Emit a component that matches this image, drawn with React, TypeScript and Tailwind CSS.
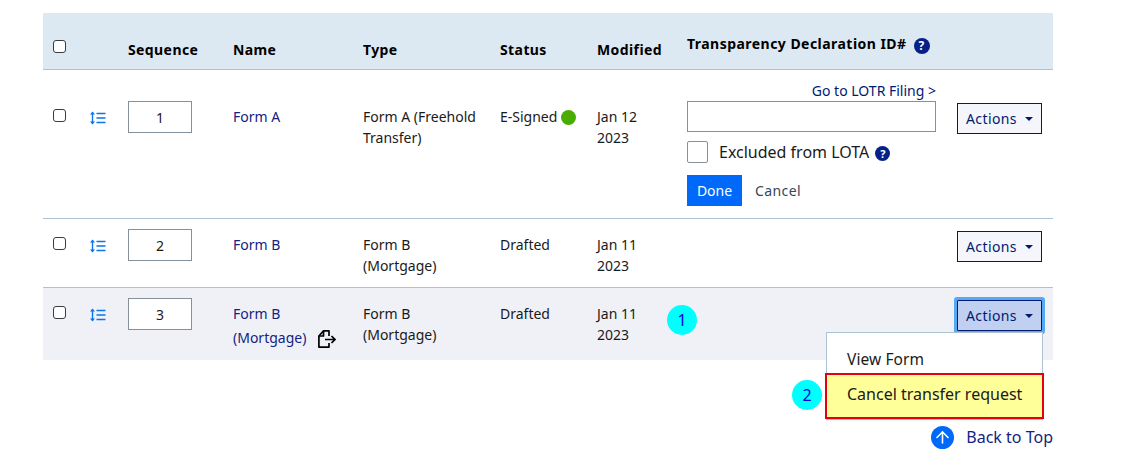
import { ArrowUp } from "lucide-react";

const rowGrid =
  "grid grid-cols-[37px_38px_105px_130px_137px_97px_90px_270px_96px] pl-[10px] text-[14px] leading-[21px]";

function Check() {
  return (
    <input
      type="checkbox"
      className="mt-[1px] block h-[13px] w-[13px] appearance-none rounded-[3px] border border-[#3b3b3b] bg-white"
    />
  );
}

function ReorderIcon() {
  return (
    <svg width="18" height="14" viewBox="0 0 18 14" fill="none" stroke="#0a74e8" className="mt-[3px] ml-[-1px]">
      <path d="M3.5 1.5v11" strokeWidth="1.4" />
      <path d="M1 3.5 3.5 .6 6 3.5zM1 10.5l2.5 2.9L6 10.5z" fill="#0a74e8" stroke="none" />
      <path d="M7.5 2.5h9M7.5 7h9M7.5 11.5h9" strokeWidth="1.5" />
    </svg>
  );
}

function HelpDot({ size }: { size: string }) {
  return (
    <span
      className={`${size} inline-flex items-center justify-center rounded-full bg-[#062089] align-middle font-bold text-white`}
    >
      ?
    </span>
  );
}

function ActionsButton({ open }: { open?: boolean }) {
  return (
    <button
      className={`flex h-[31px] w-[85px] items-center justify-center gap-[8px] border border-[#001a70] text-[14px] tracking-[0.4px] text-[#001a70] ${
        open ? "rounded-[1px] bg-[#c1d0f0] shadow-[0_0_0_3px_#56a8f5]" : "bg-[#f5f6fc]"
      }`}
    >
      Actions
      <span className="h-0 w-0 border-x-[4px] border-t-[4px] border-x-transparent border-t-[#001a70]" />
    </button>
  );
}

function SeqInput({ value }: { value: number }) {
  return (
    <div className="flex h-[32px] w-[64px] items-center justify-center border border-[#84919b] bg-white text-[#1a1a1a]">
      {value}
    </div>
  );
}

function Badge({ n }: { n: number }) {
  return (
    <span className="flex h-[30px] w-[30px] items-center justify-center rounded-full bg-[#00ffff] text-[16px] text-[#0000e0]">
      {n}
    </span>
  );
}

function Dated({ children }: { children: React.ReactNode }) {
  return <div className="pt-[5px] text-[#1a1a1a]">{children}</div>;
}

export default function App() {
  return (
    <div className="h-[476px] w-[1125px] overflow-hidden bg-white pt-[13px] pl-[43px] font-['Noto_Sans',sans-serif] text-[#1a1a1a]">
      <div className="relative w-[1010px]">
        {/* header */}
        <div className={`${rowGrid} h-[57px] border-b border-[#adc3d3] bg-[#dce8f2] pt-[26px] font-bold tracking-[0.4px] text-black`}>
          <Check />
          <span />
          <span>Sequence</span>
          <span>Name</span>
          <span>Type</span>
          <span>Status</span>
          <span>Modified</span>
          <span className="col-span-2 mt-[-6px] tracking-[0.46px]">
            Transparency Declaration ID#{" "}
            <HelpDot size="ml-[3px] mt-[1px] h-[16px] w-[16px] text-[12px]" />
          </span>
        </div>

        {/* row 1 */}
        <div className={`${rowGrid} h-[149px] border-b border-[#adc3d3] pt-[31px]`}>
          <div className="pt-[7px]">
            <Check />
          </div>
          <div className="pt-[7px]">
            <ReorderIcon />
          </div>
          <SeqInput value={1} />
          <Dated>
            <a className="text-[#14237f]">Form A</a>
          </Dated>
          <Dated>
            Form A (Freehold
            <br />
            Transfer)
          </Dated>
          <Dated>
            <span className="flex items-center gap-[4px]">
              E-Signed
              <span className="mt-[2px] h-[15px] w-[15px] rounded-full bg-[#48ad00]" />
            </span>
          </Dated>
          <Dated>
            Jan 12
            <br />
            2023
          </Dated>
          <div className="mt-[-20px] w-[249px]">
            <a className="mt-[-1px] block h-[21px] text-right text-[#001a70]">Go to LOTR Filing &gt;</a>
            <div className="h-[31px] border border-[#84919b] bg-white" />
            <div className="mt-[9px] flex items-center">
              <span className="h-[22px] w-[21px] rounded-[2px] border border-[#84919b]" />
              <span className="ml-[11px] text-[16px]">Excluded from LOTA</span>
              <HelpDot size="ml-[6px] mt-[3px] h-[15px] w-[15px] text-[11px]" />
            </div>
            <div className="mt-[12px] flex items-center">
              <button className="h-[31px] w-[55px] bg-[#0069fa] text-white">Done</button>
              <a className="ml-[13px] tracking-[0.4px] text-[#33475b]">Cancel</a>
            </div>
          </div>
          <div className="pt-[2px]">
            <ActionsButton />
          </div>
        </div>

        {/* row 2 */}
        <div className={`${rowGrid} h-[69px] border-b border-[#adc3d3] pt-[10px]`}>
          <div className="pt-[7px]">
            <Check />
          </div>
          <div className="pt-[7px]">
            <ReorderIcon />
          </div>
          <SeqInput value={2} />
          <Dated>
            <a className="text-[#14237f]">Form B</a>
          </Dated>
          <Dated>
            Form B
            <br />
            (Mortgage)
          </Dated>
          <Dated>Drafted</Dated>
          <Dated>
            Jan 11
            <br />
            2023
          </Dated>
          <span />
          <div className="pt-[2px]">
            <ActionsButton />
          </div>
        </div>

        {/* row 3 */}
        <div className={`${rowGrid} h-[72px] bg-[#f0f1f7] pt-[10px]`}>
          <div className="pt-[7px]">
            <Check />
          </div>
          <div className="pt-[7px]">
            <ReorderIcon />
          </div>
          <SeqInput value={3} />
          <Dated>
            <a className="text-[#14237f]">Form B</a>
            <span className="mt-[3px] flex items-center text-[#14237f]">
              (Mortgage)
              <svg width="18" height="18" viewBox="0 0 18 18" fill="none" stroke="#000" strokeWidth="1.7" className="mt-[2px] ml-[12px]">
                <path d="M11 6V.9H5.5L.9 6v11.1H11V13" strokeLinejoin="round" />
                <path d="M5.5.9V6H.9" strokeLinejoin="round" />
                <path d="M7 9.5h10M13.5 6l3.5 3.5-3.5 3.5" />
              </svg>
            </span>
          </Dated>
          <Dated>
            Form B
            <br />
            (Mortgage)
          </Dated>
          <Dated>Drafted</Dated>
          <Dated>
            Jan 11
            <br />
            2023
          </Dated>
          <div className="ml-[-20px] pt-[7px]">
            <Badge n={1} />
          </div>
          <div className="pt-[2px]">
            <ActionsButton open />
          </div>
        </div>

        {/* dropdown with annotation */}
        <div className="absolute top-[319px] left-[783px] w-[217px] border border-[#adc3d3] bg-white">
          <div className="h-[40px] pt-[16px] pl-[20px] text-[15.5px] leading-[21px] tracking-[0.1px]">View Form</div>
          <div className="mx-[-2px] h-[46px] border-2 border-[#e3000f] bg-[#ffff99] pl-[20px] pt-[9px] text-[16px] leading-[21px]">
            Cancel transfer request
          </div>
        </div>
        <div className="absolute top-[367px] left-[749px]">
          <Badge n={2} />
        </div>

        {/* back to top */}
        <div className="mt-[65px] flex items-center justify-end gap-[12px] text-[16px] leading-[24px] text-[#14237f]">
          <span className="flex h-[23px] w-[23px] items-center justify-center rounded-full bg-[#0069fa]">
            <ArrowUp size={19} color="#fff" strokeWidth={2} />
          </span>
          Back to Top
        </div>
      </div>
    </div>
  );
}
